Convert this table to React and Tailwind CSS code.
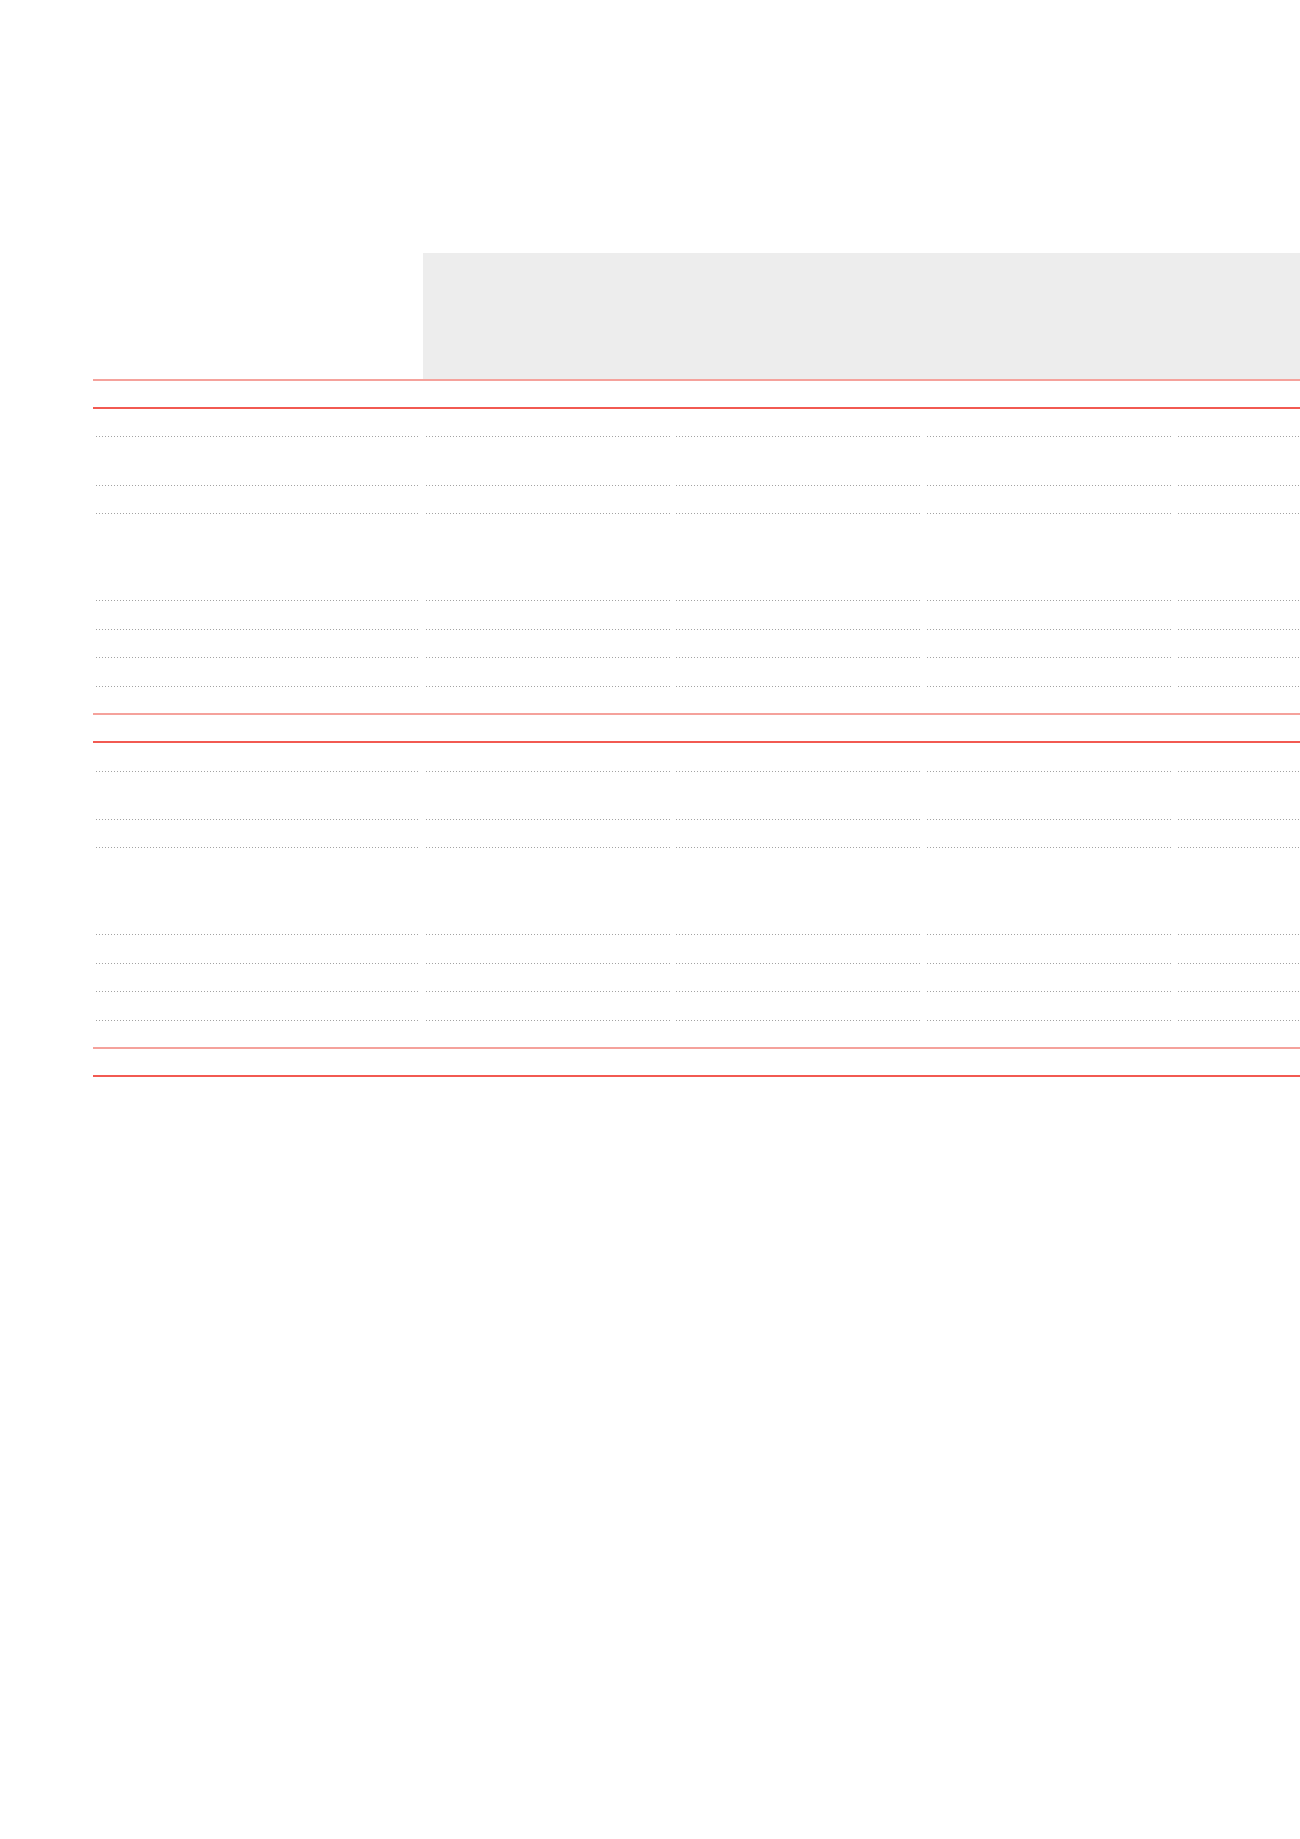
import React from "react";

// column widths of the table, left to right (the last one runs past the page edge)
const cols = ["w-[330px]", "w-[250px]", "w-[251px]", "w-[251px]", "w-[251px]"];

// each row: height class and the kind of bottom rule
const rows = [
  { h: "h-[28px]", line: "dark" },
  { h: "h-[28px]", line: "dot" },
  { h: "h-[49px]", line: "dot" },
  { h: "h-[28px]", line: "dot" },
  { h: "h-[87px]", line: "dot" },
  { h: "h-[29px]", line: "dot" },
  { h: "h-[28px]", line: "dot" },
  { h: "h-[29px]", line: "dot" },
  { h: "h-[28px]", line: "light" },
  { h: "h-[28px]", line: "dark" },
  { h: "h-[29px]", line: "dot" },
  { h: "h-[48px]", line: "dot" },
  { h: "h-[28px]", line: "dot" },
  { h: "h-[87px]", line: "dot" },
  { h: "h-[29px]", line: "dot" },
  { h: "h-[28px]", line: "dot" },
  { h: "h-[29px]", line: "dot" },
  { h: "h-[28px]", line: "light" },
  { h: "h-[28px]", line: "dark" },
];

const rowBorder = {
  dark: "border-b-2 border-[#f25a52]",
  light: "border-b-2 border-[#f5a29c]",
  dot: "",
};

function Row({ h, line }) {
  return (
    <div className={`flex box-border ${h} ${rowBorder[line]}`}>
      {cols.map((w, i) => (
        <div key={i} className={`${w} shrink-0 flex flex-col justify-end`}>
          {line === "dot" && (
            <div className="h-px mx-[3px] bg-[linear-gradient(to_right,#a3a3a3_1px,transparent_1px)] bg-[length:3px_1px] bg-repeat-x" />
          )}
        </div>
      ))}
    </div>
  );
}

export default function App() {
  return (
    <div className="w-[1300px] min-h-[1839px] bg-white overflow-hidden font-['Liberation_Sans',Arial,sans-serif]">
      <div className="pt-[253px] pl-[93px]">
        <div className="w-[1333px]">
          {/* Header */}
          <div className="flex box-border h-[128px] border-b-2 border-[#f5a29c]">
            <div className="w-[330px] shrink-0" />
            <div className="flex-1 bg-[#ededed]" />
          </div>

          {/* Body */}
          {rows.map((r, i) => (
            <Row key={i} h={r.h} line={r.line} />
          ))}
        </div>
      </div>
    </div>
  );
}
